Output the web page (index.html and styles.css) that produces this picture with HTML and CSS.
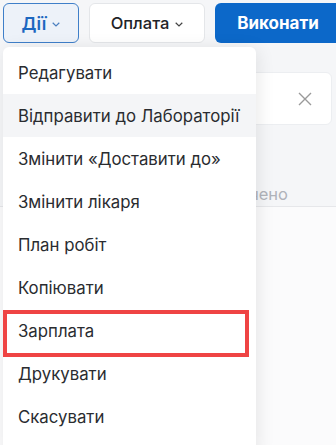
FILE: index.html
```html
<!DOCTYPE html>
<html lang="uk">
<head>
<meta charset="utf-8">
<link rel="stylesheet" href="styles.css">
</head>
<body>
<div class="page">
  <div class="toolbar">
    <button class="btn btn-actions">Дії <svg class="chev" viewBox="0 0 8 5"><path d="M0.7 0.8 L4 4 L7.3 0.8"/></svg></button>
    <button class="btn btn-pay">Оплата <svg class="chev" viewBox="0 0 8 5"><path d="M0.7 0.8 L4 4 L7.3 0.8"/></svg></button>
    <button class="btn btn-run">Виконати</button>
  </div>

  <div class="content">
    <div class="field">
      <svg class="clear" viewBox="0 0 14 14"><path d="M1 1 L13 13 M13 1 L1 13"/></svg>
    </div>
    <div class="status">Не призначено</div>
  </div>
  <div class="lower"></div>

  <div class="menu">
    <div class="item">Редагувати</div>
    <div class="item hover">Відправити до Лабораторії</div>
    <div class="item">Змінити «Доставити до»</div>
    <div class="item">Змінити лікаря</div>
    <div class="item">План робіт</div>
    <div class="item">Копіювати</div>
    <div class="item marked">Зарплата<span class="mark"></span></div>
    <div class="item">Друкувати</div>
    <div class="item">Скасувати</div>
  </div>
</div>
</body>
</html>
```

FILE: styles.css
```css
* { box-sizing: border-box; }
html, body {
  margin: 0;
  padding: 0;
  height: 100%;
  overflow: hidden;
}
body {
  background: #f5f6f8;
  font-family: Inter, "Noto Sans", sans-serif;
  color: #1f2328;
}
.page {
  position: relative;
  width: 336px;
  height: 445px;
  overflow: hidden;
}
.toolbar {
  display: flex;
  gap: 10px;
  padding: 3px 0 0 3px;
  height: 43px;
}
.btn {
  height: 40px;
  border-radius: 6px;
  font-family: Inter, "Noto Sans", sans-serif;
  font-size: 16.5px;
  display: flex;
  align-items: center;
  justify-content: center;
  gap: 6px;
  padding: 0;
  flex: none;
}
.chev {
  width: 8px;
  height: 5px;
  fill: none;
  stroke: currentColor;
  stroke-width: 1.2;
  margin-top: 3px;
}
.btn-actions {
  width: 76px;
  background: #edf2f9;
  border: 1.5px solid #3f7fc9;
  color: #1c67c0;
  font-weight: 600;
  font-size: 17.5px;
}
.btn-actions .chev { color: #4a7fc0; }
.btn-pay {
  width: 116px;
  background: #fff;
  border: 1px solid #e4e6e9;
  color: #1f2328;
  font-weight: 500;
}
.btn-pay .chev { color: #444; }
.btn-run {
  width: 126px;
  background: #0c68c9;
  border: none;
  color: #fff;
  font-weight: 700;
  font-size: 17px;
}
.content {
  padding: 29px 4px 0 3px;
  height: 163px;
}
.field {
  height: 53px;
  background: #fff;
  border: 1px solid #eceef1;
  border-radius: 6px;
  display: flex;
  justify-content: flex-end;
  align-items: center;
  padding-right: 19px;
}
.clear {
  width: 14px;
  height: 14px;
  fill: none;
  stroke: #9a9a9a;
  stroke-width: 1.4;
}
.status {
  margin-top: 59px;
  width: 285px;
  text-align: right;
  font-size: 16.5px;
  color: #b0b3ba;
}
.lower {
  border-top: 1px solid #e6e7ea;
  background: #fbfbfc;
  height: 240px;
}
.menu {
  position: absolute;
  left: 3px;
  top: 47px;
  width: 253px;
  bottom: -10px;
  background: #fff;
  border-radius: 6px 6px 0 0;
  box-shadow: 2px 2px 18px rgba(0, 0, 0, 0.09);
  padding-top: 4px;
}
.item {
  position: relative;
  height: 43px;
  display: flex;
  align-items: center;
  padding-left: 15px;
  font-size: 16.8px;
  color: #2a2c30;
}
.item.hover { background: #f4f5f7; }
.mark {
  position: absolute;
  left: 0;
  right: 7px;
  top: 1px;
  bottom: -5px;
  border: 4px solid #ef4444;
}
```
